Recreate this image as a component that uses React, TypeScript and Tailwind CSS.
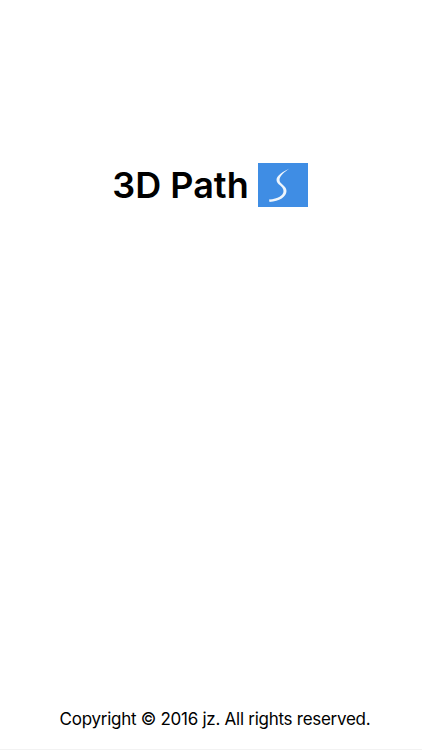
export default function App() {
  return (
    <div className="flex h-[750px] w-[422px] flex-col bg-white font-['Inter','Liberation_Sans',sans-serif] text-black">
      {/* Logo + title */}
      <div className="flex items-center justify-center gap-[9px] pt-[163px] pr-[2px]">
        <span className="text-[36px] leading-[44px] font-semibold">3D Path</span>
        <svg width="50" height="44" viewBox="0 0 50 44" className="block">
          <rect width="50" height="44" fill="#3f8de4" />
          <path
            d="M31.5 5.5C25 8.5 18.5 12.5 18.5 17C18.5 21.5 25.5 23 25.5 28C25.5 32.5 20 35.8 11 36.6L11.5 39C21.5 38.5 28.5 33.5 28.5 28C28.5 22.5 21.5 21 21.5 17C21.5 13 26.5 9 31.5 5.5Z"
            fill="#eef5fc"
          />
        </svg>
      </div>

      {/* Footer */}
      <div className="mt-auto border-b border-[#f2f2f2] pb-[19px] pl-[8px] text-center text-[17px] leading-[22px] tracking-[-0.27px]">
        Copyright © 2016 jz. All rights reserved.
      </div>
    </div>
  );
}
